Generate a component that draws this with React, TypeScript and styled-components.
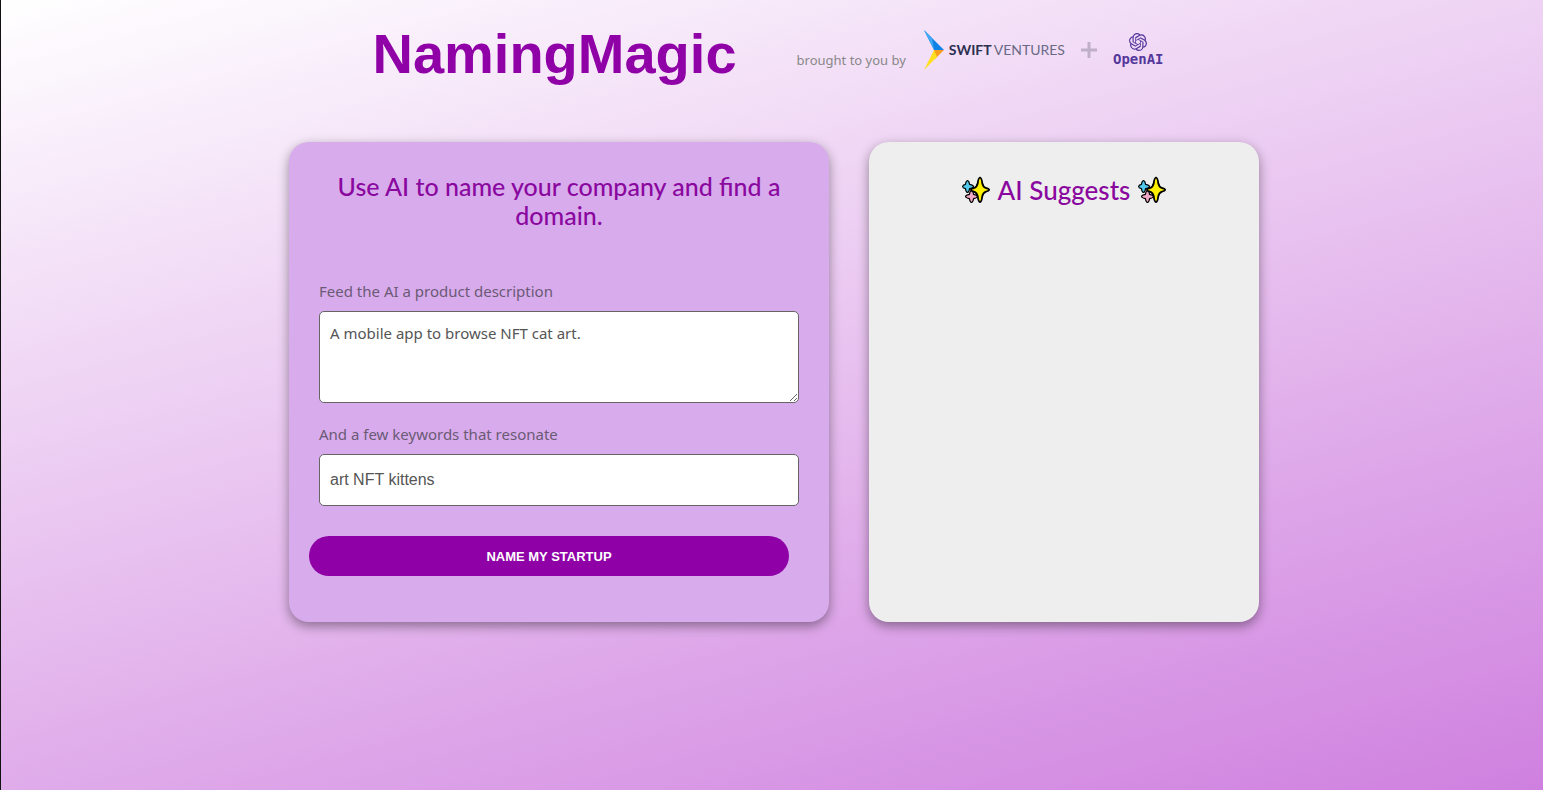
import React from "react";
import styled, { createGlobalStyle } from "styled-components";
import { SiOpenai } from "react-icons/si";

const GlobalStyle = createGlobalStyle`
  *, *::before, *::after { box-sizing: border-box; }
  body {
    margin: 0;
    font-family: "Noto Sans", sans-serif;
    color: #555;
  }
`;

const Page = styled.div`
  min-height: 100vh;
  border-left: 1px solid #111;
  background: linear-gradient(165deg, #fff, #cf80df);
`;

const Header = styled.header`
  display: flex;
  justify-content: center;
  gap: 60px;
  padding: 18px 8px 0 0;
`;

const Title = styled.h1`
  margin: 0;
  font: 700 56px/72px "Liberation Sans", sans-serif;
  color: #8f00a7;
`;

const Sponsors = styled.div`
  display: flex;
  align-items: center;
  height: 64px;
  font-size: 13px;
  color: #888;
`;

const Byline = styled.span`
  padding: 20px 18px 0 0;
`;

const SwiftMark = styled.svg`
  width: 20px;
  height: 40px;
  margin-right: 5px;
`;

const SwiftName = styled.span`
  font: 400 14px/20px Lato, sans-serif;
  color: #6b6a86;

  b { color: #2b2f50; margin-right: 2px; }
`;

const Plus = styled.svg`
  width: 16px;
  height: 16px;
  margin: 0 16px;
`;

const OpenAI = styled.div`
  display: flex;
  flex-direction: column;
  align-items: center;
  font: 700 14px/16px "DejaVu Sans Mono", monospace;
  color: #54379b;

  svg { width: 18px; height: 18px; }
`;

const Panels = styled.main`
  display: flex;
  justify-content: center;
  gap: 40px;
  padding: 52px 0 40px 4px;
`;

const Card = styled.section<{ $tone: string; $width: number }>`
  width: ${(p) => p.$width}px;
  min-height: 480px;
  padding: 30px 20px;
  border-radius: 20px;
  background: ${(p) => p.$tone};
  box-shadow: 0 4px 12px rgba(0, 0, 0, 0.4);
`;

const Heading = styled.h2`
  margin: 0;
  font: 500 25px/29px Lato, sans-serif;
  text-align: center;
  color: #8a089f;
`;

const ResultsHeading = styled(Heading)`
  display: flex;
  align-items: center;
  justify-content: center;
  gap: 8px;
  font-size: 26px;
  line-height: 36px;
`;

const Form = styled.form`
  display: flex;
  flex-direction: column;
  margin-top: 50px;
`;

const Field = styled.div`
  display: flex;
  flex-direction: column;
  padding: 0 10px;
  margin-bottom: 20px;
`;

const Label = styled.label`
  margin-bottom: 8px;
  font-size: 15px;
  line-height: 23px;
  color: #6b5a75;
`;

const Description = styled.textarea`
  height: 92px;
  padding: 10px;
  border: 1px solid #666;
  border-radius: 5px;
  font: 15px/23px "Noto Sans", sans-serif;
  color: #555;
`;

const Keywords = styled.input`
  height: 52px;
  padding: 0 10px;
  border: 1px solid #666;
  border-radius: 5px;
  font: 16px "Liberation Sans", sans-serif;
  color: #555;
`;

const Submit = styled.button`
  height: 40px;
  margin: 10px 20px 0 0;
  border: 0;
  border-radius: 20px;
  background: #8f00a7;
  font: 700 13px "Liberation Sans", sans-serif;
  color: #fff;
`;

const SparkleIcon = styled.svg`
  width: 28px;
  height: 28px;
`;

const Sparkles = () => (
  <SparkleIcon viewBox="0 0 28 28" stroke="#000" strokeLinejoin="round" aria-hidden="true">
    <path strokeWidth="1.200" fill="#50c8ec" d="M5.500 4.500Q7 4.800 7.600 8.400Q11.200 9 11.500 10.500Q11.200 12 7.600 12.600Q7 16.200 5.500 16.500Q4 16.200 3.400 12.600Q0.700 12 0.600 10.500Q0.700 9 3.400 8.400Q4 4.800 5.500 4.500Z" />
    <path strokeWidth="1.200" fill="#f0a8c4" d="M9.500 14.500Q11 14.800 11.600 18.400Q15.200 19 15.500 20.500Q15.200 22 11.600 22.600Q11 26.200 9.500 26.500Q8 26.200 7.400 22.600Q3.800 22 3.500 20.500Q3.800 19 7.400 18.400Q8 14.800 9.500 14.500Z" />
    <path strokeWidth="1.800" fill="#fff000" d="M18 1.500Q19.700 2 20.200 7Q21 11 24 12Q27.200 12.700 27.200 13.800Q27.200 14.900 24 15.600Q21 16.500 20.200 20.500Q19.700 25.600 18 26.200Q16.300 25.600 15.800 20.500Q15 16.500 12 15.600Q9 14.900 9 13.800Q9 12.700 12 12Q15 11 15.800 7Q16.300 2 18 1.500Z" />
  </SparkleIcon>
);

export default function App() {
  return (
    <Page>
      <GlobalStyle />
      <Header>
        <Title>NamingMagic</Title>
        <Sponsors>
          <Byline>brought to you by</Byline>
          <SwiftMark viewBox="0 0 20 40" aria-hidden="true">
            <path fill="#0e82e5" d="M0 0L20 20H10Z" />
            <path fill="#42a8f4" d="M0 0L8 8L10 20Z" />
            <path fill="#f99d1c" d="M10 20H20L11 29Z" />
            <path fill="#ffe020" d="M10 20L13 27L0 40Z" />
          </SwiftMark>
          <SwiftName><b>SWIFT</b>VENTURES</SwiftName>
          <Plus viewBox="0 0 16 16" stroke="#bfafc8" strokeWidth="3" aria-hidden="true">
            <path d="M8 0V16M0 8H16" />
          </Plus>
          <OpenAI>
            <SiOpenai aria-hidden="true" />
            OpenAI
          </OpenAI>
        </Sponsors>
      </Header>
      <Panels>
        <Card $tone="#d8acec" $width={540}>
          <Heading>Use AI to name your company and find a domain.</Heading>
          <Form onSubmit={(e) => e.preventDefault()}>
            <Field>
              <Label htmlFor="description">Feed the AI a product description</Label>
              <Description id="description" defaultValue="A mobile app to browse NFT cat art." />
            </Field>
            <Field>
              <Label htmlFor="keywords">And a few keywords that resonate</Label>
              <Keywords id="keywords" defaultValue="art NFT kittens" />
            </Field>
            <Submit type="submit">NAME MY STARTUP</Submit>
          </Form>
        </Card>
        <Card $tone="#eee" $width={390}>
          <ResultsHeading><Sparkles />AI Suggests<Sparkles /></ResultsHeading>
        </Card>
      </Panels>
    </Page>
  );
}
